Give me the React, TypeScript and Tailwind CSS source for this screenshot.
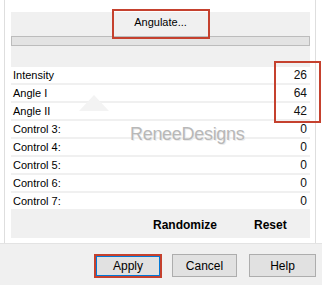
import React from 'react';

const rows: [string, number][] = [
  ['Intensity', 26],
  ['Angle I', 64],
  ['Angle II', 42],
  ['Control 3:', 0],
  ['Control 4:', 0],
  ['Control 5:', 0],
  ['Control 6:', 0],
  ['Control 7:', 0],
];

export default function App() {
  return (
    <div className="relative w-[322px] h-[285px] bg-white flex flex-col overflow-hidden font-['Liberation_Sans',Arial,sans-serif] text-[11px] text-black">
      <div className="h-[244px] flex border-b border-[#e3e3e3]">
        <div className="w-[4px]" />
        <div className="w-px bg-[#dedede]" />
        <div className="w-[6px]" />
        <div className="relative w-[299px] mt-[12px] h-[226px] bg-[#f0f0f0] flex flex-col">
          <div className="h-[24px] flex items-center justify-center pb-[3px]">Angulate...</div>
          <div className="h-[10px] border border-[#bcbcbc] bg-[#e3e3e3]" />
          <div className="h-[21px]" />
          <div className="flex flex-col">
            {rows.map(([label, value]) => (
              <div key={label} className="h-[16px] mb-[2px] bg-white flex items-center justify-between pl-[2px] pr-[3px]">
                <span>{label}</span>
                <span className="text-[12px] text-[#111]">{value}</span>
              </div>
            ))}
          </div>
          <div className="flex-1 flex items-center font-bold text-[12px]">
            <span className="ml-[142px]">Randomize</span>
            <span className="ml-[37px]">Reset</span>
          </div>
          <svg className="absolute left-[58px] top-[77px]" width="50" height="30" viewBox="0 0 50 30">
            <polygon points="25,6 40,22 10,22" fill="#f3f3f3" />
          </svg>
          <span className="absolute left-[119px] top-[109px] text-[18px] text-[#b8b8b8] tracking-[-0.3px] [text-shadow:1px_1px_0_#ececec]">
            ReneeDesigns
          </span>
        </div>
        <div className="w-[5px]" />
        <div className="w-px bg-[#dedede]" />
      </div>
      <div className="flex-1 bg-[#f0f0f0] flex justify-end items-start pt-[10px] pr-[6px]">
        <div className="w-[68px] h-[24px] border-2 border-[#c5412e] flex">
          <div className="flex-1 border border-[#0078d7] bg-[#e1e1e1] flex items-center justify-center text-[12px]">Apply</div>
        </div>
        <button className="ml-[10px] w-[65px] h-[23px] border border-[#adadad] bg-[#e1e1e1] text-[12px]">Cancel</button>
        <button className="ml-[12px] w-[67px] h-[23px] border border-[#adadad] bg-[#e1e1e1] text-[12px]">Help</button>
      </div>
      <div className="absolute left-[112px] top-[9px] w-[98px] h-[30px] border-2 border-[#c5412e]" />
      <div className="absolute left-[274px] top-[61px] w-[47px] h-[62px] border-2 border-[#c5412e]" />
    </div>
  );
}
